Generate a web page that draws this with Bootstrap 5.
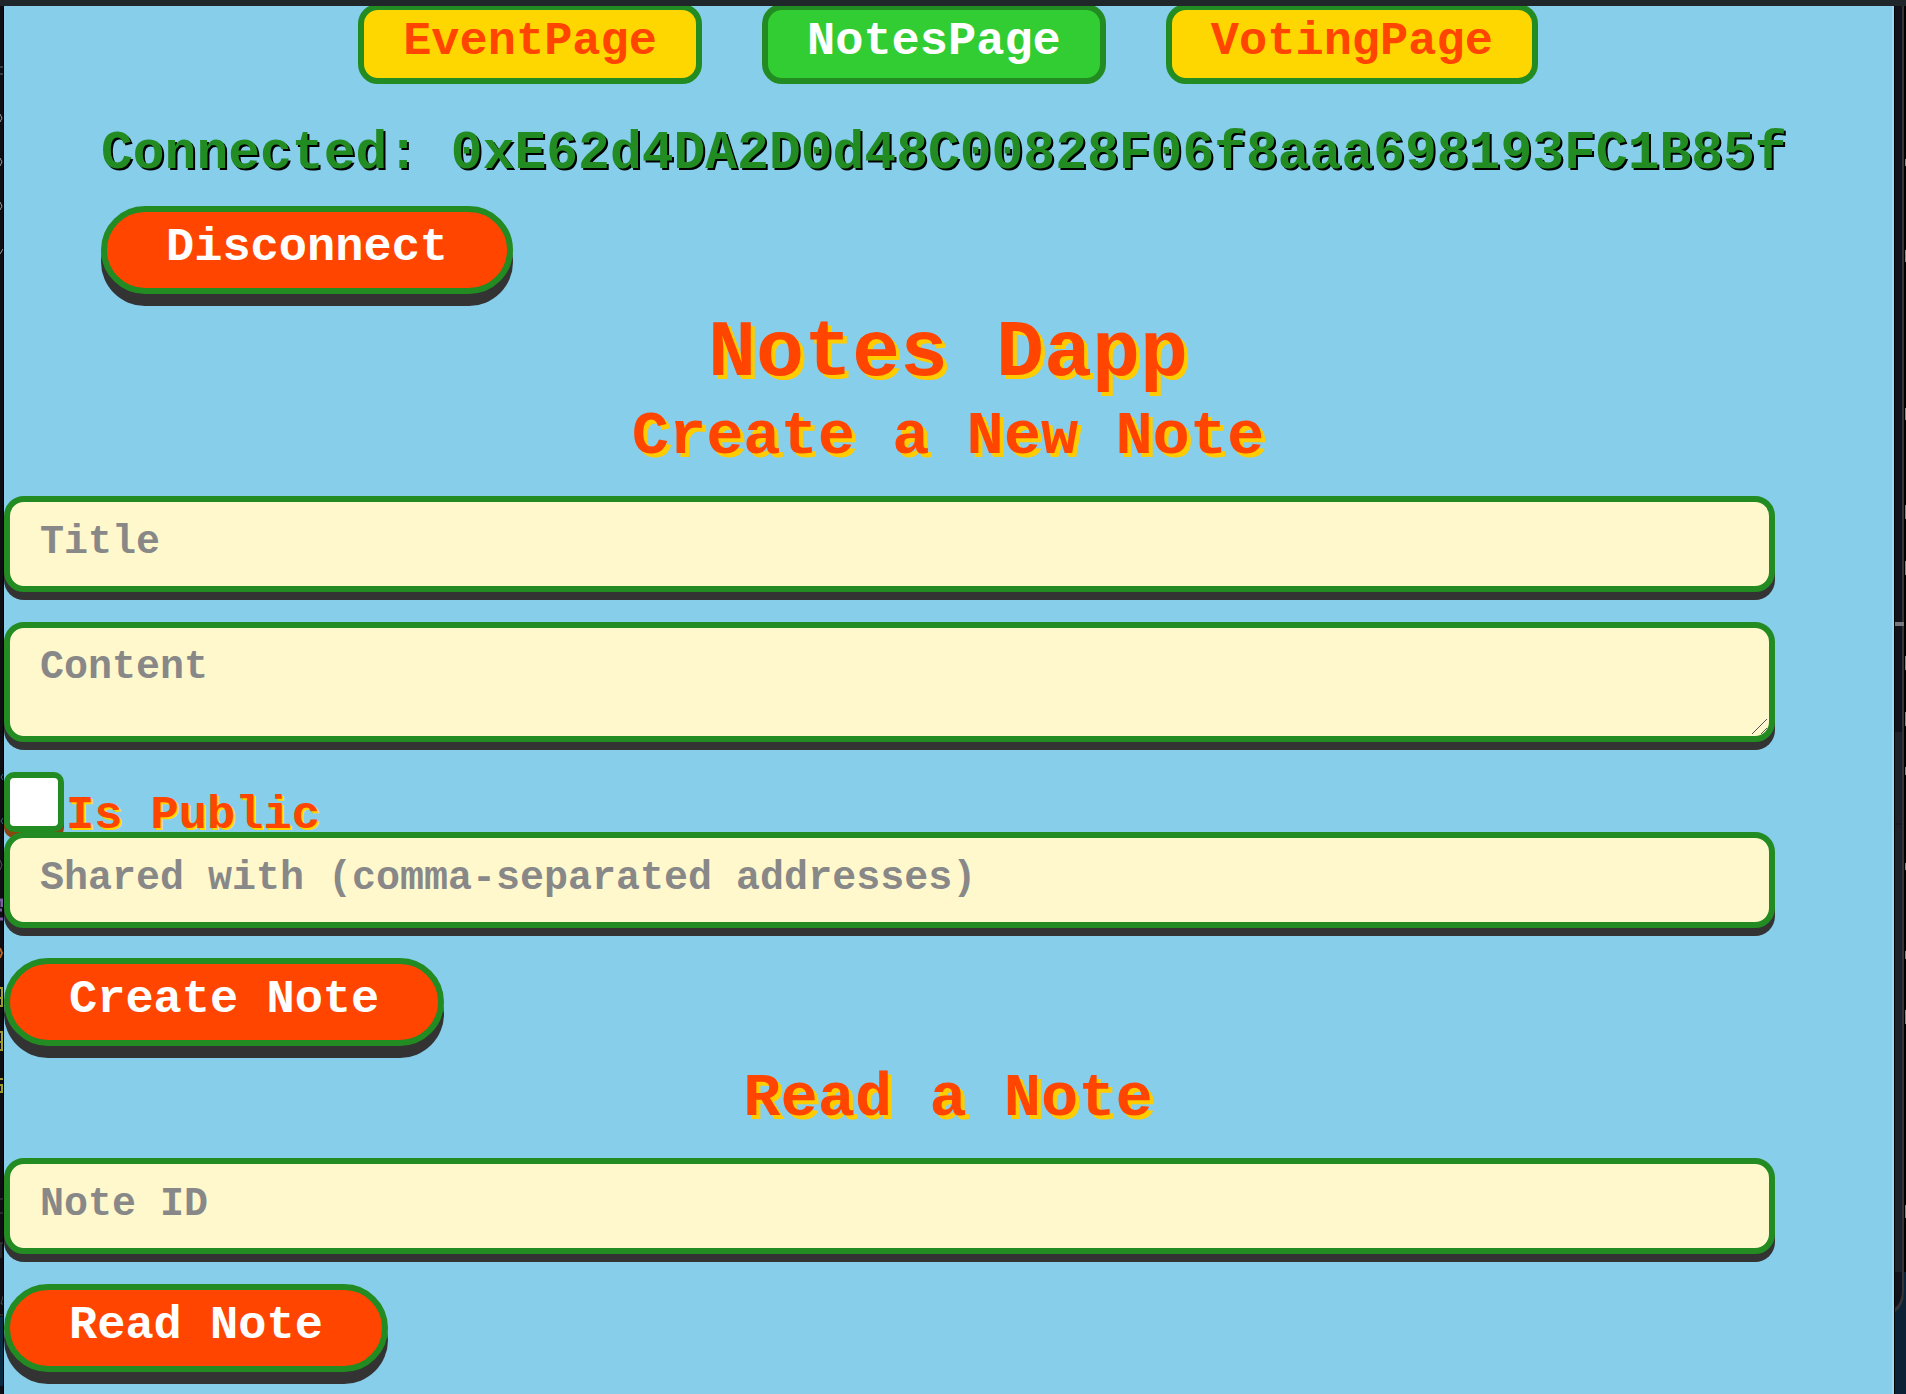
<!DOCTYPE html>
<html lang="en">
<head>
<meta charset="utf-8">
<meta name="viewport" content="width=device-width, initial-scale=1">
<title>Notes Dapp</title>
<link href="https://cdn.jsdelivr.net/npm/bootstrap@5.3.0/dist/css/bootstrap.min.css" rel="stylesheet">
<style>
:root { --leaf: #228b22; --flame: #ff4500; --gold: #ffd700; --shade: #333; }
body { background: #0a1c2b; font-family: "Liberation Mono", monospace; font-weight: 700; }
.desk { min-height: 100vh; }
.rail-left { width: 4px; background: #0d0d12; border-right: 1px solid #000; }
.rail-right { width: 12px; background: #000; padding-left: 1px; }
.rail-left svg, .rail-right svg { display: block; }
.topbar { height: 6px; background: #1f272b; position: relative; z-index: 1; }
.screen { background: #87ceeb; border-right: 2px solid #9ad9f0; min-width: 0; padding-bottom: 10px; }
.pagenav { gap: 60px; margin-top: -2px; }
.pagenav .btn { border: 6px solid var(--leaf); border-radius: 20px; background: var(--gold); color: var(--flame); font-size: 47px; font-weight: 700; line-height: 60px; padding: 2px 39px 6px; }
.pagenav .btn.active { background: #32cd32; border-color: var(--leaf); color: #fff; }
.wallet { padding: 40px 97px 0; }
.wallet-text { color: var(--leaf); font-size: 53px; line-height: 60px; text-shadow: 2px 2px #000; margin: 0 0 22px; white-space: nowrap; }
.btn-flame, .btn-flame:hover { border: 6px solid var(--leaf); border-radius: 44px; background: var(--flame); color: #fff; font-size: 47px; font-weight: 700; line-height: 60px; padding: 6px 59px 10px; box-shadow: 0 12px 0 var(--shade); }
h1, h2 { color: var(--flame); font-weight: 700; text-align: center; text-shadow: 4px 4px #ffcc00; margin: 0; }
h1 { font-size: 80px; line-height: 96px; padding-top: 12px; }
h2 { font-size: 62px; line-height: 70px; }
h2.read-title { padding-top: 18px; }
.field, .field:focus { width: calc(90% + 72px); height: 96px; border: 6px solid var(--leaf); border-radius: 20px; background: #fff8cd; color: #333; font-size: 40px; font-weight: 700; line-height: 48px; padding: 16px 30px 20px; box-shadow: 0 8px 0 var(--shade); margin: 0 0 30px; }
.field::placeholder { color: #888; opacity: 1; }
.area-wrap { position: relative; width: calc(90% + 72px); margin-bottom: 30px; }
.area-wrap .field { width: 100%; height: 120px; min-height: 120px; display: block; overflow: hidden; resize: none; margin: 0; }
.grip { position: absolute; right: 7px; bottom: 7px; pointer-events: none; }
.public-row { height: 60px; padding-bottom: 0; }
.public-row .form-check-input { width: 60px; height: 60px; margin: 0; border: 6px solid var(--leaf); border-radius: 10px; background-color: #fff; box-shadow: 0 6px 0 #8b4513; }
.public-row label { color: var(--flame); font-size: 47px; line-height: 32px; text-shadow: 2px 2px var(--gold); padding-left: 2px; }
.shared { position: relative; }
</style>
<script src="https://cdn.jsdelivr.net/npm/bootstrap@5.3.0/dist/js/bootstrap.bundle.min.js"></script>
</head>
<body>
<div class="desk d-flex flex-column">
  <div class="topbar"></div>
  <div class="d-flex flex-grow-1">
    <div class="rail-left flex-shrink-0" aria-hidden="true">
      <svg width="3" height="1380" viewBox="0 6 3 1380" fill="none" stroke-width="1">
        <path d="M0 67h3M0 74h3" stroke="#3a3a44" stroke-width="2"/>
        <path d="M0 114l2 4l-2 4M0 158l2 4l-2 4M0 202l2 4l-2 4M0 254l3-5" stroke="#999"/>
        <path d="M3 774l-2 3l2 3M3 818l-2 3l2 3" stroke="#2d6f85"/>
        <path d="M0 860l2 5l-2 5" stroke="#4b5053"/>
        <path d="M0 900h3M0 910h2M0 919h3M2 900v7" stroke="#7d5ba6" stroke-width="3"/>
        <path d="M0 948l2 5l-2 5" stroke="#b5602a" stroke-width="2"/>
        <path d="M0 988h2v18h-2M0 998h3M0 1032h2v18h-2M0 1042h3M3 1079h-3M0 1085h2v7h-2" stroke="#a09a2c" stroke-width="2"/>
        <path d="M0 1199h3M0 1213h3M0 1243h3M1 1243v15M3 1296l-2 8h2M0 1315h3" stroke="#44444c"/>
        <path d="M0 1317h3v69H0z" fill="#082b42"/>
      </svg>
    </div>
    <main class="screen flex-grow-1">
      <nav class="pagenav d-flex justify-content-center">
        <a class="btn" href="#event">EventPage</a>
        <a class="btn active" href="#notes" aria-current="page">NotesPage</a>
        <a class="btn" href="#voting">VotingPage</a>
      </nav>
      <section class="wallet">
        <p class="wallet-text">Connected: 0xE62d4DA2D0d48C00828F06f8aaa698193FC1B85f</p>
        <button class="btn btn-flame" type="button">Disconnect</button>
      </section>
      <h1>Notes Dapp</h1>
      <h2>Create a New Note</h2>
      <form class="pt-4">
        <input class="form-control field" type="text" placeholder="Title" aria-label="Title">
        <div class="area-wrap">
          <textarea class="form-control field" placeholder="Content" aria-label="Content"></textarea>
          <svg class="grip" width="16" height="16" viewBox="0 0 16 16" fill="none" stroke="#555" aria-hidden="true"><path d="M0 15L15 0M9 15L15 9"/></svg>
        </div>
        <div class="public-row d-flex align-items-end">
          <input class="form-check-input" type="checkbox" id="isPublic">
          <label for="isPublic">Is Public</label>
        </div>
        <input class="form-control field shared" type="text" placeholder="Shared with (comma-separated addresses)" aria-label="Shared with">
        <button class="btn btn-flame" type="button">Create Note</button>
      </form>
      <h2 class="read-title">Read a Note</h2>
      <form class="pt-4">
        <input class="form-control field" type="text" placeholder="Note ID" aria-label="Note ID">
        <button class="btn btn-flame" type="button">Read Note</button>
      </form>
    </main>
    <div class="rail-right flex-shrink-0" aria-hidden="true">
      <svg width="11" height="1388" viewBox="0 6 11 1388">
        <path d="M0 1272h11v122H0z" fill="#0b2236"/>
        <path d="M0 6h9v1286q0 14-9 20z" fill="#333338"/>
        <path d="M0 6h7v1284q0 12-7 18z" fill="#12131a"/>
        <path d="M0 732h7v540H0z" fill="#1e202a"/>
        <path d="M0 824h7" stroke="#14151c"/>
        <path d="M0 622h9v4H0z" fill="#77777b"/>
        <path d="M10 159h1v7h-1zM10 250h1v12h-1zM10 408h1v12h-1zM10 505h1v14h-1zM10 561h1v14h-1zM10 656h1v14h-1zM10 712h1v14h-1zM10 767h1v8h-1zM10 863h1v7h-1zM10 951h1v8h-1zM10 1010h1v14h-1zM10 1205h1v13h-1z" fill="#888"/>
      </svg>
    </div>
  </div>
</div>
</body>
</html>
